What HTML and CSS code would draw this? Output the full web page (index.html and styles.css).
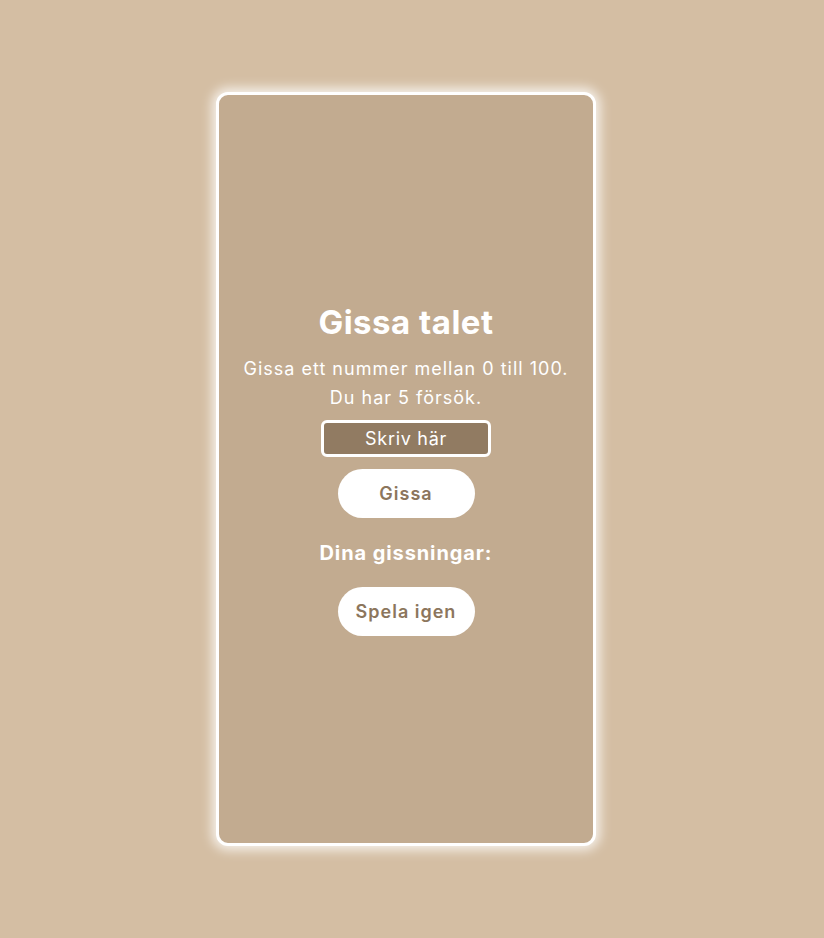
FILE: index.html
```html
<!DOCTYPE html>
<html lang="sv">
<head>
    <meta charset="UTF-8">
    <meta name="viewport" content="width=device-width, initial-scale=1.0">
    <title>Gissa talet</title>
    <link rel="stylesheet" href="styles.css">
</head>
<body>
    <div class="game">
        <h1>Gissa talet</h1>
        <p class="info">Gissa ett nummer mellan 0 till 100.<br>Du har 5 försök.</p>
        <input class="guess-input" type="text" placeholder="Skriv här">
        <button class="btn guess-btn">Gissa</button>
        <h3 class="guesses-title">Dina gissningar:</h3>
        <div class="guesses"></div>
        <button class="btn restart-btn">Spela igen</button>
    </div>
</body>
</html>
```

FILE: styles.css
```css
body {
    margin: 0;
    padding: 0 12px 0 0;
    min-height: 100vh;
    display: flex;
    align-items: center;
    justify-content: center;
    background: #d4bea3;
    font-family: "Inter", "Open Sans", sans-serif;
    color: white;
}

.game {
    width: 374px;
    height: 748px;
    border: 3px solid white;
    border-radius: 12px;
    background: #c2ab90;
    box-shadow: 0 0 12px 4px rgba(255, 255, 255, 0.8);
    display: flex;
    flex-direction: column;
    align-items: center;
    justify-content: center;
    text-align: center;
}

h1 {
    margin: 0 0 12px;
    font-size: 33px;
    line-height: 40px;
    font-weight: 700;
    letter-spacing: 0.5px;
}

.info {
    margin: 0 0 8px;
    font-size: 18px;
    line-height: 29px;
    letter-spacing: 1px;
}

.guess-input {
    width: 164px;
    height: 31px;
    box-sizing: content-box;
    padding: 0;
    border: 3px solid white;
    border-radius: 6px;
    background: #917b62;
    color: white;
    font-family: inherit;
    font-size: 18px;
    letter-spacing: 0.7px;
    text-align: center;
    outline: none;
}

.guess-input::placeholder {
    color: white;
}

.btn {
    width: 137px;
    height: 49px;
    border: none;
    border-radius: 25px;
    background: white;
    color: #8c765d;
    font-family: inherit;
    font-size: 18px;
    font-weight: 600;
    letter-spacing: 1px;
    cursor: pointer;
}

.guess-btn {
    margin-top: 12px;
}

.guesses-title {
    margin: 23px 0 22px;
    font-size: 20px;
    line-height: 24px;
    font-weight: 700;
    letter-spacing: 0.9px;
}
```
